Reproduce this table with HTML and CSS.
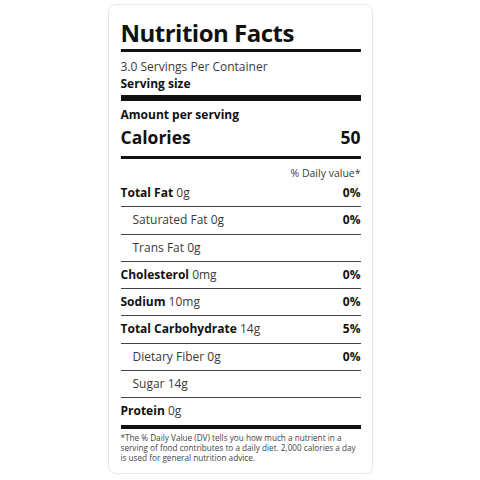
FILE: index.html
```html
<!DOCTYPE html>
<html lang="en">
  <head>
    <meta charset="UTF-8" />
    <meta name="viewport" content="width=device-width, initial-scale=1.0" />
    <title>Nutrition Facts</title>
    <link rel="stylesheet" href="styles.css">
  </head>
  <body>
    <div class="label">
      <h1 class="title">Nutrition Facts</h1>

      <div class="servings">
        <p>3.0 Servings Per Container</p>
        <p class="bold">Serving size</p>
      </div>

      <div class="calories">
        <p class="bold">Amount per serving</p>
        <div class="cal-row">
          <span>Calories</span>
          <span>50</span>
        </div>
      </div>

      <p class="dv-head">% Daily value*</p>

      <ul class="nutrients">
        <li class="row"><span><b>Total Fat</b> 0g</span><b>0%</b></li>
        <li class="row sub"><span>Saturated Fat 0g</span><b>0%</b></li>
        <li class="row sub"><span>Trans Fat 0g</span></li>
        <li class="row"><span><b>Cholesterol</b> 0mg</span><b>0%</b></li>
        <li class="row"><span><b>Sodium</b> 10mg</span><b>0%</b></li>
        <li class="row"><span><b>Total Carbohydrate</b> 14g</span><b>5%</b></li>
        <li class="row sub"><span>Dietary Fiber 0g</span><b>0%</b></li>
        <li class="row sub"><span>Sugar 14g</span></li>
        <li class="row last"><span><b>Protein</b> 0g</span></li>
      </ul>

      <p class="note">
        *The % Daily Value (DV) tells you how much a nutrient in a serving of
        food contributes to a daily diet. 2,000 calories a day is used for
        general nutrition advice.
      </p>
    </div>
  </body>
</html>
```

FILE: styles.css
```css
body {
  font-family: "Open Sans", "Noto Sans", sans-serif;
  margin: 0;
  padding: 0;
  background-color: #fff;
  color: #3a3a3a;
}
p {
  margin: 0;
}
b,
.bold {
  font-weight: 700;
  color: #111;
}
.label {
  width: 240px;
  margin: 4px auto 0;
  padding: 12px 11px 10px 12px;
  border: 1px solid #e8e8e8;
  border-radius: 8px;
  box-shadow: 0 1px 3px rgba(0, 0, 0, 0.04);
}
.title {
  margin: 0;
  font-size: 24px;
  line-height: 32px;
  font-weight: 700;
  letter-spacing: -0.5px;
  color: #111;
  border-bottom: 3px solid #111;
}
.servings {
  padding: 6px 0 3px;
  font-size: 12px;
  line-height: 17px;
  border-bottom: 6px solid #111;
}
.calories {
  padding: 5px 0 7px;
  font-size: 12px;
  line-height: 17px;
  border-bottom: 3px solid #111;
}
.cal-row {
  display: flex;
  justify-content: space-between;
  font-size: 17.5px;
  line-height: 24px;
  font-weight: 700;
  color: #111;
  margin-top: 2px;
}
.dv-head {
  text-align: right;
  font-size: 10.5px;
  line-height: 15px;
  padding-top: 7px;
}
.nutrients {
  list-style: none;
  margin: 0;
  padding: 0;
}
.row {
  display: flex;
  justify-content: space-between;
  font-size: 12px;
  line-height: 16px;
  padding: 5px 0 5.3px;
  border-bottom: 1.5px solid #444;
}
.row:first-child {
  padding-top: 4px;
}
.row.sub {
  padding-left: 12px;
}
.row.last {
  border-bottom: 4px solid #111;
}
.note {
  font-size: 8.2px;
  line-height: 10px;
  padding-top: 4px;
  color: #444;
}
```
